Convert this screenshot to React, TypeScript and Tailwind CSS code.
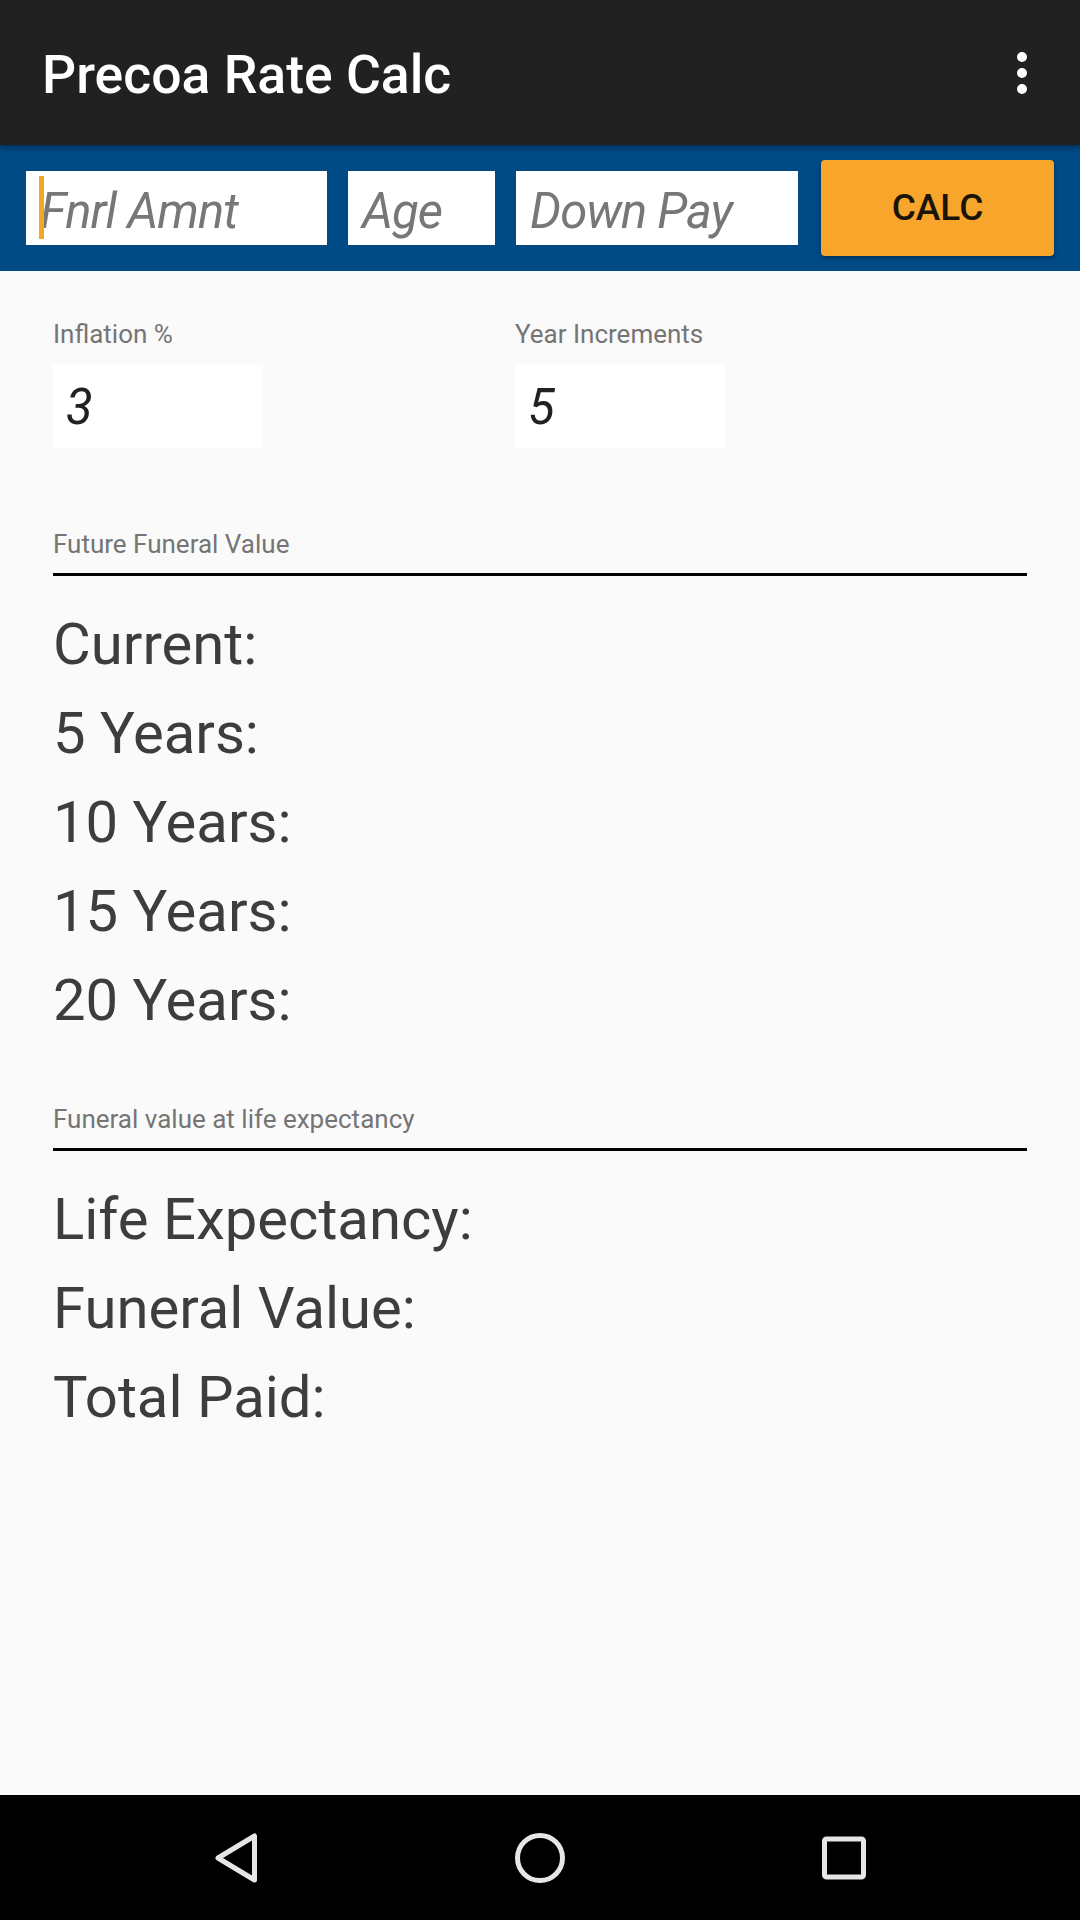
import React from 'react';

const rows1 = ['Current:', '5 Years:', '10 Years:', '15 Years:', '20 Years:'];
const rows2 = ['Life Expectancy:', 'Funeral Value:', 'Total Paid:'];

function TopInput({ width, text, cursor }: { width: string; text: string; cursor?: boolean }) {
  return (
    <div className={`relative ${width} h-[74px] bg-white flex items-center pl-[14px]`}>
      {cursor && <span className="absolute left-[13px] top-[5px] w-[5px] h-[63px] bg-[#f5a623]" />}
      <span className="mt-[6px] text-[49px] italic tracking-[-1px] text-[#777777] leading-none">{text}</span>
    </div>
  );
}

function ValueBox({ value }: { value: string }) {
  return (
    <div className="w-[210px] h-[84px] bg-white flex items-center pl-[13px]">
      <span className="mt-[3px] text-[49px] italic text-[#212121]">{value}</span>
    </div>
  );
}

function Section({ title, rows }: { title: string; rows: string[] }) {
  return (
    <div>
      <div className="text-[26px] leading-[30px] text-[#757575]">{title}</div>
      <div className="mt-[14px] h-[3px] bg-black" />
      <div className="mt-[24px]">
        {rows.map((r) => (
          <div key={r} className="text-[58px] leading-[89px] text-[#3d3d3d]">
            {r}
          </div>
        ))}
      </div>
    </div>
  );
}

export default function App() {
  return (
    <div className="w-[1080px] h-[1920px] flex flex-col bg-[#fafafa] font-['Roboto',sans-serif] overflow-hidden">
      <header className="relative z-10 h-[145px] shrink-0 bg-[#212121] flex items-center justify-between pl-[42px] pr-[53px] shadow-[0_3px_5px_rgba(0,0,0,0.35)]">
        <h1 className="mt-[5px] text-[53.5px] font-medium text-white">Precoa Rate Calc</h1>
        <div className="flex flex-col gap-[6px]">
          <span className="w-[10px] h-[10px] rounded-full bg-white" />
          <span className="w-[10px] h-[10px] rounded-full bg-white" />
          <span className="w-[10px] h-[10px] rounded-full bg-white" />
        </div>
      </header>

      <div className="h-[126px] shrink-0 bg-[#004a86] flex items-center px-[26px] gap-[21px]">
        <TopInput width="w-[301px]" text="Fnrl Amnt" cursor />
        <TopInput width="w-[147px]" text="Age" />
        <TopInput width="w-[282px]" text="Down Pay" />
        <button className="ml-[2px] w-[233px] h-[96px] rounded-[4px] bg-[#f7a62b] shadow-[0_2px_4px_rgba(0,0,0,0.35)] text-[37px] font-medium text-[#1b1409]">
          CALC
        </button>
      </div>

      <main className="flex-1 px-[53px]">
        <div className="mt-[48px] flex">
          <div className="w-[462px]">
            <div className="text-[26px] leading-[30px] text-[#757575]">Inflation %</div>
            <div className="mt-[15px]">
              <ValueBox value="3" />
            </div>
          </div>
          <div>
            <div className="text-[26px] leading-[30px] text-[#757575]">Year Increments</div>
            <div className="mt-[15px]">
              <ValueBox value="5" />
            </div>
          </div>
        </div>

        <div className="mt-[81px]">
          <Section title="Future Funeral Value" rows={rows1} />
        </div>
        <div className="mt-[59px]">
          <Section title="Funeral value at life expectancy" rows={rows2} />
        </div>
      </main>

      <nav className="h-[125px] shrink-0 bg-black flex items-center justify-center gap-[244px]">
        <svg width="60" height="60" viewBox="0 0 60 60" fill="none" stroke="#e6e6e6" strokeWidth="5" strokeLinejoin="round">
          <path d="M48.5 8 L48.5 52 L12 30 Z" />
        </svg>
        <svg width="60" height="60" viewBox="0 0 60 60" fill="none" stroke="#e6e6e6" strokeWidth="5">
          <circle cx="30" cy="30" r="22.5" />
        </svg>
        <svg width="60" height="60" viewBox="0 0 60 60" fill="none" stroke="#e6e6e6" strokeWidth="5">
          <rect x="10.5" y="11" width="39" height="38" rx="2" />
        </svg>
      </nav>
    </div>
  );
}
